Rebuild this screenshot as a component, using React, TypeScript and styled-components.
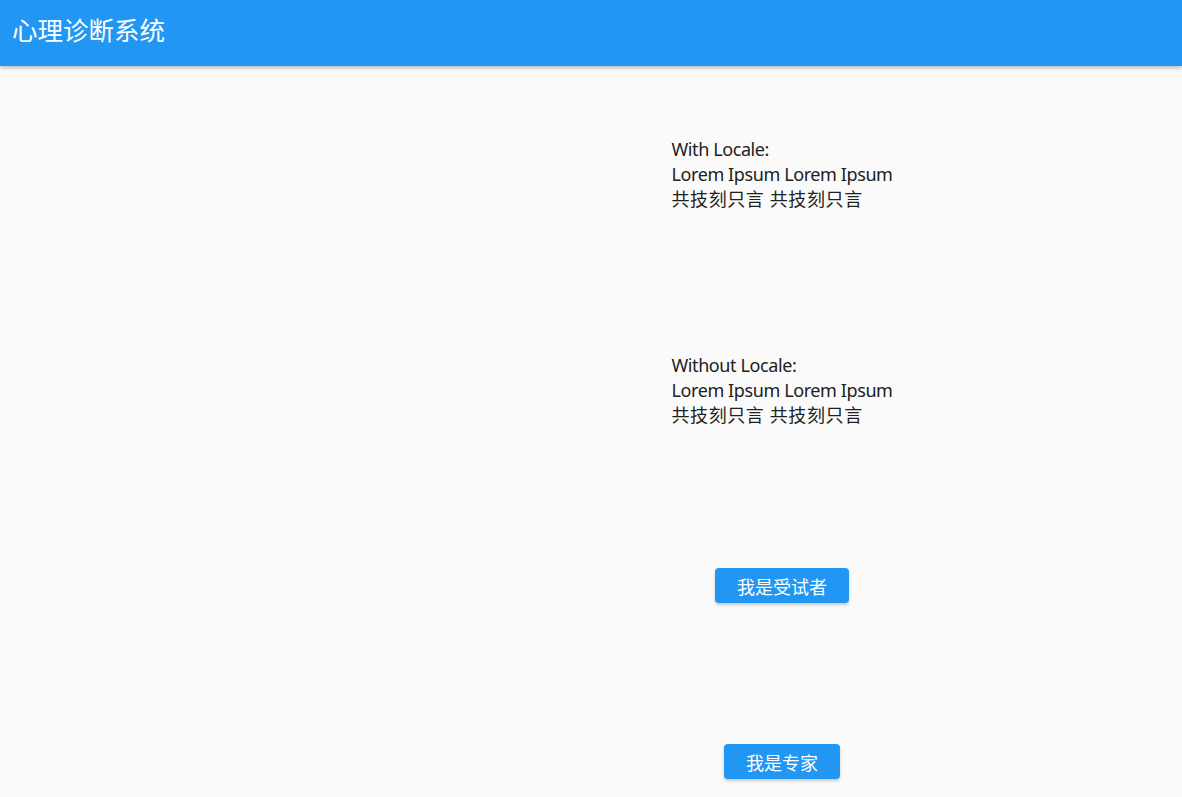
import React from 'react'
import styled, { createGlobalStyle } from 'styled-components'

const GlobalStyle = createGlobalStyle`
  html, body {
    margin: 0;
    padding: 0;
    background: #fafafa;
    font-family: "Noto Sans", "Noto Sans CJK SC", sans-serif;
  }
`

const Page = styled.div`
  width: 1182px;
  height: 797px;
  overflow: hidden;
  background: #fafafa;
  display: flex;
  flex-direction: column;
`

const AppBar = styled.header`
  height: 66px;
  box-sizing: border-box;
  flex-shrink: 0;
  background: #2196f3;
  display: flex;
  align-items: center;
  padding: 0 12px 9px;
  box-shadow: 0 2px 4px rgba(0, 0, 0, 0.25);
  position: relative;
  z-index: 1;
`

const Title = styled.h1`
  margin: 0;
  color: #ffffff;
  font-size: 25.5px;
  font-weight: 400;
  font-family: "Noto Sans CJK SC", sans-serif;
`

const Body = styled.main`
  padding-left: 382px;
  display: flex;
  flex-direction: column;
  align-items: center;
`

const TextBlock = styled.div<{ $top: number }>`
  margin-top: ${p => p.$top}px;
  font-size: 18px;
  line-height: 25px;
  color: #212121;
  font-family: "Noto Sans", "Noto Sans CJK SC", sans-serif;
`

const Line = styled.div<{ $cjk?: boolean }>`
  white-space: nowrap;
  letter-spacing: ${p => (p.$cjk ? '0.6px' : '-0.4px')};
`

const Button = styled.button<{ $top: number }>`
  margin-top: ${p => p.$top}px;
  height: 35px;
  padding: 0 22px;
  border: none;
  border-radius: 4px;
  background: #2196f3;
  color: #ffffff;
  font-size: 18px;
  font-family: "Noto Sans CJK SC", sans-serif;
  box-shadow: 0 2px 3px rgba(0, 0, 0, 0.2);
  cursor: pointer;
`

const LocaleText: React.FC<{ label: string; top: number }> = ({ label, top }) => (
  <TextBlock $top={top}>
    <Line>{label}</Line>
    <Line>Lorem Ipsum Lorem Ipsum</Line>
    <Line $cjk>共技刻只言 共技刻只言</Line>
  </TextBlock>
)

const App: React.FC = () => {
  return (
    <>
      <GlobalStyle />
      <Page>
        <AppBar>
          <Title>心理诊断系统</Title>
        </AppBar>
        <Body>
          <LocaleText label="With Locale:" top={71} />
          <LocaleText label="Without Locale:" top={141} />
          <Button $top={140}>我是受试者</Button>
          <Button $top={141}>我是专家</Button>
        </Body>
      </Page>
    </>
  )
}

export default App
